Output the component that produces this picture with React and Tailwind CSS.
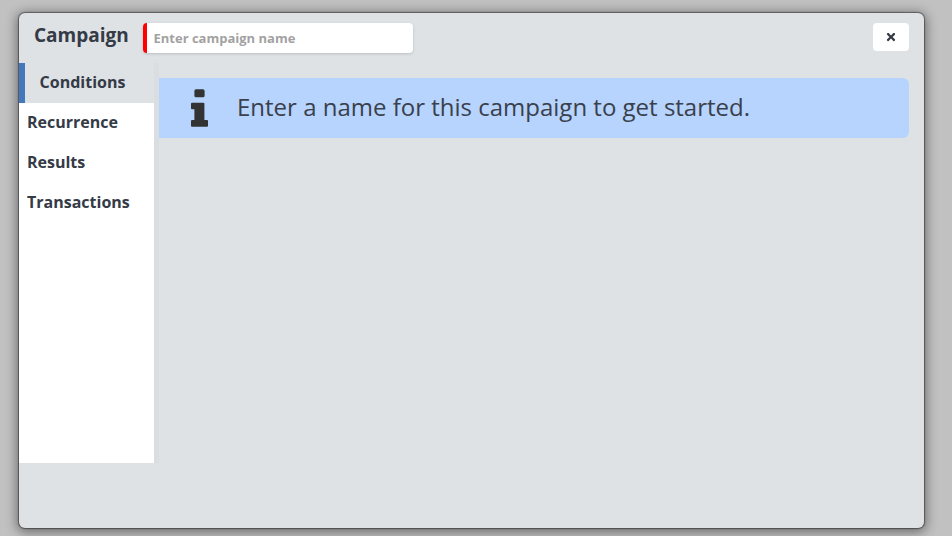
import React from "react";
import { FaTimes } from "react-icons/fa";

const font = { fontFamily: '"Open Sans", sans-serif' };

function Tab({ children }) {
  return (
    <div className="h-10 pl-2 pb-[2px] flex items-center text-base font-bold text-[#343a46]">{children}</div>
  );
}

function InfoIcon() {
  return (
    <svg width="17" height="38" viewBox="0 0 17 38" fill="#333333">
      <rect x="3.4" y="0.3" width="10.2" height="8" rx="1.6" />
      <path d="M1 13.7H12.4a1 1 0 0 1 1 1V31H16a1 1 0 0 1 1 1v4.7a1 1 0 0 1-1 1H1a1 1 0 0 1-1-1V32a1 1 0 0 1 1-1H3.4V20.3H1a1 1 0 0 1-1-1v-4.6a1 1 0 0 1 1-1z" />
    </svg>
  );
}

export default function App() {
  return (
    <div className="w-[952px] h-[536px] bg-[#c1c1c1] pt-[13px] pl-[19px] overflow-hidden" style={font}>
      <div className="w-[905px] h-[515px] bg-[#dee2e5] rounded-md shadow-[0_0_1px_1px_rgba(0,0,0,0.4),0_2px_12px_2px_rgba(0,0,0,0.45)] flex flex-col">
        <div className="h-[50px] flex items-start shrink-0">
          <div className="ml-[15px] mt-[9px] w-[109px] text-[19px] leading-[27px] font-bold text-[#343a46]">Campaign</div>
          <div className="mt-[10px] w-[270px] h-[30px] bg-white rounded border-l-4 border-[#ff0000] shadow-[0_1px_3px_rgba(0,0,0,0.15)] flex items-center pl-[6.5px] pt-[1px] text-[13px] font-bold text-[#a2a2a2]">
            Enter campaign name
          </div>
          <div className="ml-auto mr-[15px] mt-[10px] w-9 h-7 bg-white rounded flex items-center justify-center text-[#343a46]">
            <FaTimes size={12} />
          </div>
        </div>
        <div className="flex">
          <div className="w-[135px] h-[400px] bg-white shrink-0">
            <div className="h-10 bg-[#dee2e5] border-l-[6px] border-[#4477bb] flex items-center justify-center pb-[2px] pr-[14px] text-base font-bold text-[#343a46]">
              Conditions
            </div>
            <Tab>Recurrence</Tab>
            <Tab>Results</Tab>
            <Tab>Transactions</Tab>
          </div>
          <div className="w-[5px] h-[400px] bg-[#dadee1] shrink-0" />
          <div className="mt-[15px] w-[750px] h-[60px] bg-[#b6d4fe] rounded-r-md flex items-center">
            <div className="w-[78px] pl-[32px] shrink-0">
              <InfoIcon />
            </div>
            <div className="text-[24px] leading-[32px] pb-[2px] text-[#3a404c]">Enter a name for this campaign to get started.</div>
          </div>
        </div>
      </div>
    </div>
  );
}
